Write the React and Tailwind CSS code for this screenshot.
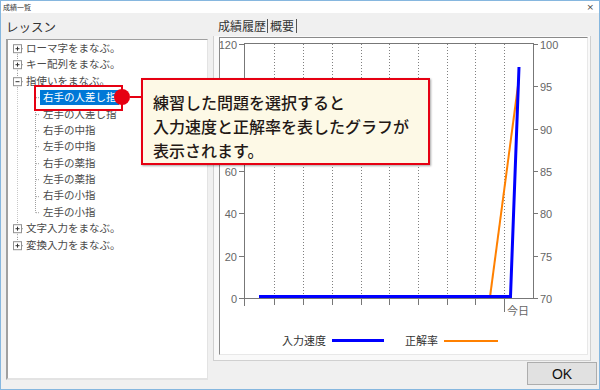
const jp = { fontFamily: '"Noto Sans CJK JP", "Noto Sans", sans-serif' }

const tree = [
  { label: 'ローマ字をまなぶ。' },
  { label: 'キー配列をまなぶ。' },
  {
    label: '指使いをまなぶ。',
    open: true,
    children: ['右手の人差し指', '左手の人差し指', '右手の中指', '左手の中指', '右手の薬指', '左手の薬指', '右手の小指', '左手の小指'],
  },
  { label: '文字入力をまなぶ。' },
  { label: '変換入力をまなぶ。' },
]

const ROW = 16.4
const C = 8.2

function TopGutter({ first, last, open }) {
  return (
    <svg width="16" height={ROW} className="shrink-0 overflow-visible">
      {!first && <line x1="9.5" y1="0" x2="9.5" y2={C - 4} stroke="#a0a0a0" strokeDasharray="1 1" />}
      {!last && <line x1="9.5" y1={C + 4} x2="9.5" y2={ROW} stroke="#a0a0a0" strokeDasharray="1 1" />}
      <line x1="14" y1={C + 0.5} x2="16" y2={C + 0.5} stroke="#a0a0a0" strokeDasharray="1 1" />
      <rect x="5.5" y={C - 3.5} width="8" height="8" fill="#fff" stroke="#919191" />
      <line x1="7.5" y1={C + 0.5} x2="11.5" y2={C + 0.5} stroke="#333" />
      {!open && <line x1="9.5" y1={C - 1.5} x2="9.5" y2={C + 2.5} stroke="#333" />}
    </svg>
  )
}

function ChildGutter({ last }) {
  return (
    <svg width="32" height={ROW} className="shrink-0 overflow-visible">
      <line x1="9.5" y1="0" x2="9.5" y2={ROW} stroke="#c8c8c8" strokeDasharray="1 1" />
      <line x1="27.5" y1="0" x2="27.5" y2={last ? C + 0.5 : ROW} stroke="#a0a0a0" strokeDasharray="1 1" />
      <line x1="28" y1={C + 0.5} x2="32" y2={C + 0.5} stroke="#a0a0a0" strokeDasharray="1 1" />
    </svg>
  )
}

function Tree() {
  return (
    <div className="flex flex-col text-[10.5px] text-[#4a4a4a]" style={jp}>
      {tree.map((t, i) => (
        <div key={t.label}>
          <div className="flex items-center h-[16.4px]">
            <TopGutter first={i === 0} last={i === tree.length - 1} open={t.open} />
            <span className="pl-[2px] leading-none whitespace-nowrap">{t.label}</span>
          </div>
          {t.open &&
            t.children.map((c, j) => (
              <div key={c} className="flex items-center h-[16.4px]">
                <ChildGutter last={j === t.children.length - 1} />
                <span
                  className={
                    j === 0
                      ? 'pl-[3px] pr-[2px] h-[15px] flex items-center bg-[#0078d7] text-white whitespace-nowrap'
                      : 'pl-[3px] pr-[2px] leading-none whitespace-nowrap'
                  }
                >
                  {c}
                </span>
              </div>
            ))}
        </div>
      ))}
    </div>
  )
}

const gx = [274, 303, 332, 361, 389, 418, 447, 475, 504]
const leftLabels = [[120, 44], [100, 86], [80, 129], [60, 171], [40, 213], [20, 256], [0, 298]]
const rightLabels = [[100, 44], [95, 86], [90, 129], [85, 171], [80, 213], [75, 256], [70, 298]]

function Chart() {
  return (
    <svg width="368" height="289" viewBox="220 38 368 289" className="block">
      <line x1="244" y1="43.5" x2="533" y2="43.5" stroke="#777" />
      {gx.map((x) => (
        <line key={x} x1={x + 0.5} y1="44" x2={x + 0.5} y2="298" stroke="#808080" strokeDasharray="1 2" />
      ))}
      <line x1="244.5" y1="43" x2="244.5" y2="306" stroke="#777" />
      <line x1="533.5" y1="43" x2="533.5" y2="298" stroke="#777" />
      <line x1="244" y1="298.5" x2="534" y2="298.5" stroke="#777" />
      {gx.map((x) => (
        <line key={'t' + x} x1={x + 0.5} y1="298" x2={x + 0.5} y2={x === 504 ? 312 : 305} stroke="#777" />
      ))}
      {leftLabels.map(([v, y]) => (
        <g key={'l' + v}>
          <line x1="239" y1={y + 0.5} x2="244" y2={y + 0.5} stroke="#777" />
          <text x="237" y={y + 0.5} textAnchor="end" dominantBaseline="central" fontSize="11" fill="#666" fontFamily="Liberation Sans, sans-serif">
            {v}
          </text>
        </g>
      ))}
      {rightLabels.map(([v, y]) => (
        <g key={'r' + v}>
          <line x1="533" y1={y + 0.5} x2="538" y2={y + 0.5} stroke="#777" />
          <text x="540" y={y + 0.5} dominantBaseline="central" fontSize="11" fill="#666" fontFamily="Liberation Sans, sans-serif">
            {v}
          </text>
        </g>
      ))}
      <text x="507" y="310" dominantBaseline="central" fontSize="11" fill="#666" fontFamily='"Noto Sans CJK JP", sans-serif'>
        今日
      </text>
      <polyline points="490,297 518.5,82" fill="none" stroke="#ff8000" strokeWidth="2" />
      <polyline points="259,296.5 510.5,296.5 519,67" fill="none" stroke="#0000ff" strokeWidth="3" />
    </svg>
  )
}

export default function App() {
  return (
    <div className="relative w-[600px] h-[390px] flex flex-col border border-[#86b7df] bg-[#f0f0f0] overflow-hidden" style={jp}>
      <div className="h-[12px] bg-white flex items-center justify-between pl-[2px] pr-[5px]">
        <span className="text-[7px] leading-none text-[#333]">成績一覧</span>
        <span className="text-[9px] leading-none text-[#444]" style={{ fontFamily: '"DejaVu Sans", sans-serif' }}>
          ×
        </span>
      </div>

      <div className="flex flex-1">
        <div className="w-[207px] pl-[5px] flex flex-col">
          <div className="h-[26px] flex items-center pt-[2px] text-[12.5px] text-[#333]">レッスン</div>
          <div className="h-[341px] bg-white border-l-2 border-t border-l-[#a0a0a0] border-t-[#a0a0a0] border-r border-b-2 border-r-[#e3e3e3] border-b-[#e3e3e3]">
            <Tree />
          </div>
        </div>

        <div className="ml-[5px] flex-1 flex flex-col">
          <div className="h-[23px] flex items-end pl-[5px] pb-[3px] text-[12px] text-[#333]">
            <span className="leading-[14px] pr-[1px] border-r border-[#555]">成績履歴</span>
            <span className="leading-[14px] px-[2px] border-r border-[#555]">概要</span>
          </div>
          <div className="w-[378px] h-[325px] bg-[#f9f9f9] border-l border-b border-r border-[#d0d0d0] pl-[5px] pt-px">
            <div className="w-[369px] h-[318px] bg-white border-l border-t border-[#8a8a8a] border-r border-b border-r-[#e8e8e8] border-b-[#e8e8e8] flex flex-col">
              <Chart />
              <div className="h-[27px] flex items-center pl-[62px] text-[11px] text-[#333]">
                <span>入力速度</span>
                <span className="ml-[6px] w-[52px] h-[3px] bg-[#0000ff]" />
                <span className="ml-[21px]">正解率</span>
                <span className="ml-[6px] w-[54px] h-[2px] bg-[#ff8000]" />
              </div>
            </div>
          </div>
          <div className="flex justify-end pr-[2px] pt-[1px]">
            <button className="w-[70px] h-[23px] bg-[#e1e1e1] border border-[#adadad] text-[14px] text-[#111] leading-none" style={{ fontFamily: '"Liberation Sans", sans-serif' }}>
              OK
            </button>
          </div>
        </div>
      </div>

      <div className="absolute left-[33px] top-[84px] w-[89px] h-[26px] border-2 border-[#e60012]" />
      <div className="absolute left-[129px] top-[95px] w-[12px] h-[2px] bg-[#e60012]" />
      <div className="absolute left-[113px] top-[88px] w-[16px] h-[16px] rounded-full bg-[#e60012]" />
      <div className="absolute left-[140px] top-[77px] w-[289px] h-[87px] bg-[#fdf9e6] border-2 border-[#e60012] shadow-[1px_1px_2px_rgba(0,0,0,0.35)] pl-[10px] pt-[10px] text-[16px] leading-[24px] text-[#231815] font-medium">
        <div>練習した問題を選択すると</div>
        <div>入力速度と正解率を表したグラフが</div>
        <div>表示されます。</div>
      </div>
    </div>
  )
}
